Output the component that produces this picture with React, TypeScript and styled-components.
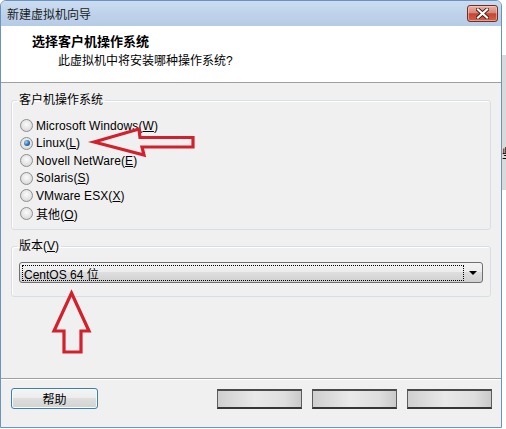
import React from "react";
import styled, { createGlobalStyle } from "styled-components";

const Global = createGlobalStyle`
  html, body { margin: 0; padding: 0; background: #ffffff; }
  body {
    font-family: "Liberation Sans", "Noto Sans CJK SC", sans-serif;
    font-size: 12px;
    color: #000;
  }
`;

const Page = styled.div`
  position: relative;
  display: flex;
  width: 506px;
  height: 429px;
  overflow: hidden;
`;

const Window = styled.div`
  width: 502px;
  height: 428px;
  box-sizing: border-box;
  border: 1px solid #6b93bf;
  border-radius: 6px 6px 0 0;
  display: flex;
  flex-direction: column;
  background: #f0f0f0;
  overflow: hidden;
  flex: none;
`;

const TitleBar = styled.div`
  height: 25px;
  flex: none;
  display: flex;
  align-items: center;
  justify-content: space-between;
  padding: 0 3px 0 6px;
  background: linear-gradient(#cadcf0, #bcd1e9 60%, #b6cce6);
  color: #1a1a1a;
  font-size: 12px;
`;

const CloseButton = styled.div`
  width: 31px;
  height: 17px;
  box-sizing: border-box;
  border: 1px solid #6e2f28;
  border-radius: 3px;
  background: linear-gradient(#eab2a4 0%, #d98675 45%, #c7452f 52%, #d0614c 100%);
  display: flex;
  align-items: center;
  justify-content: center;
  box-shadow: inset 0 0 0 1px rgba(255, 220, 210, 0.5);
`;

const Header = styled.div`
  height: 57px;
  flex: none;
  box-sizing: border-box;
  background: #ffffff;
  border-bottom: 1px solid #a0a0a0;
  padding: 8px 0 0 31px;
`;

const Heading = styled.div`
  font-size: 13px;
  font-weight: bold;
  line-height: 16px;
`;

const Subtitle = styled.div`
  font-size: 12px;
  line-height: 16px;
  margin-top: 3px;
  padding-left: 26px;
`;

const Body = styled.div`
  flex: 1;
  padding: 10px 10px 0 10px;
  display: flex;
  flex-direction: column;
`;

const Group = styled.fieldset<{ $top: number; $pt: number; $pb: number }>`
  margin: ${(p) => p.$top}px 0 0 0;
  padding: ${(p) => p.$pt}px 0 ${(p) => p.$pb}px 0;
  border: 1px solid #d5dfe5;
  border-radius: 3px;
  box-shadow: inset 1px 1px 0 #ffffff;
  min-width: 0;
`;

const Legend = styled.legend`
  margin-left: 5px;
  padding: 0 2px;
  font-size: 12px;
  line-height: 14px;
`;

const RadioList = styled.div`
  display: flex;
  flex-direction: column;
  padding-left: 8px;
`;

const RadioRow = styled.div`
  height: 17.5px;
  display: flex;
  align-items: center;
  gap: 3px;
  font-size: 12px;
  letter-spacing: 0.1px;
`;

const Circle = styled.span<{ $checked?: boolean }>`
  position: relative;
  width: 13px;
  height: 13px;
  box-sizing: border-box;
  border-radius: 50%;
  border: 1px solid #8c8e8e;
  background: radial-gradient(circle at 50% 40%, #fbfbfb, #e2e2e2 60%, #cfcfcf);
  flex: none;
  &::after {
    content: "";
    display: ${(p) => (p.$checked ? "block" : "none")};
    position: absolute;
    left: 2.5px;
    top: 2.5px;
    width: 6px;
    height: 6px;
    border-radius: 50%;
    background: radial-gradient(circle at 35% 35%, #a8d6f7, #2a6cb0 55%, #143c70);
  }
`;

const Combo = styled.div`
  margin: 0 7px;
  height: 21px;
  box-sizing: border-box;
  border: 1px solid #707070;
  border-radius: 3px;
  background: linear-gradient(#f3f3f3, #ececec 50%, #dedede 50%, #d0d0d0);
  display: flex;
  align-items: stretch;
`;

const FocusRect = styled.div`
  flex: 1;
  margin: 2px 0 1px 2px;
  border: 1px dotted #000;
  padding-left: 1px;
  display: flex;
  align-items: center;
  font-size: 12px;
`;

const DropArrow = styled.div`
  width: 18px;
  flex: none;
  display: flex;
  align-items: center;
  justify-content: center;
  &::before {
    content: "";
    border-left: 4px solid transparent;
    border-right: 4px solid transparent;
    border-top: 4px solid #000;
  }
`;

const Footer = styled.div`
  height: 39px;
  flex: none;
  border-top: 1px solid #a0a0a0;
  box-shadow: inset 0 1px 0 #ffffff;
  padding: 9px 9px 0 10px;
  display: flex;
  align-items: flex-start;
`;

const HelpButton = styled.div`
  width: 87px;
  height: 21px;
  box-sizing: border-box;
  border: 1px solid #3c7fb1;
  border-radius: 3px;
  background: linear-gradient(#f4f4f4, #ececec 50%, #dedede 50%, #d2d2d2);
  box-shadow: inset 0 0 0 1px #f8fbfd;
  display: flex;
  align-items: center;
  justify-content: center;
  font-size: 12px;
`;

const Spacer = styled.div`
  flex: 1;
`;

const ButtonGroup = styled.div`
  display: flex;
  gap: 10px;
  margin-top: 1px;
`;

const BlankButton = styled.div`
  width: 85px;
  height: 20px;
  box-sizing: border-box;
  border: 1px solid #5c5c5c;
  border-top: 2px solid #4a4a4a;
  border-bottom: 2px solid #363636;
  background: linear-gradient(90deg, #cfcfcf, #e9e9e9 45%, #dedede 80%, #c9c9c9);
`;

const Strip = styled.div`
  flex: 1;
  display: flex;
  flex-direction: column;
`;

const StripBlank = styled.div<{ $h: number }>`
  height: ${(p) => p.$h}px;
  background: #ffffff;
`;

const StripGray = styled.div`
  height: 135px;
  background: #dadada;
  display: flex;
  align-items: center;
  overflow: hidden;
  font-size: 12px;
  padding-top: 60px;
  box-sizing: border-box;
`;

const Annotations = styled.svg`
  position: absolute;
  left: 0;
  top: 0;
  pointer-events: none;
`;

const options: { label: string; key: string; checked?: boolean }[] = [
  { label: "Microsoft Windows", key: "W" },
  { label: "Linux", key: "L", checked: true },
  { label: "Novell NetWare", key: "E" },
  { label: "Solaris", key: "S" },
  { label: "VMware ESX", key: "X" },
  { label: "其他", key: "O" },
];

export default function App() {
  return (
    <>
      <Global />
      <Page>
        <Window>
          <TitleBar>
            <span>新建虚拟机向导</span>
            <CloseButton>
              <svg width="13" height="11" viewBox="0 0 13 11">
                <path d="M2 1.5 L11 9.5 M11 1.5 L2 9.5" stroke="#4a1c16" strokeWidth="4" strokeLinecap="square" />
                <path d="M2 1.5 L11 9.5 M11 1.5 L2 9.5" stroke="#ffffff" strokeWidth="2.2" strokeLinecap="square" />
              </svg>
            </CloseButton>
          </TitleBar>
          <Header>
            <Heading>选择客户机操作系统</Heading>
            <Subtitle>此虚拟机中将安装哪种操作系统?</Subtitle>
          </Header>
          <Body>
            <Group $top={0} $pt={10} $pb={7}>
              <Legend>客户机操作系统</Legend>
              <RadioList>
                {options.map((o) => (
                  <RadioRow key={o.key}>
                    <Circle $checked={o.checked} />
                    <span>
                      {o.label}(<u>{o.key}</u>)
                    </span>
                  </RadioRow>
                ))}
              </RadioList>
            </Group>
            <Group $top={9} $pt={9} $pb={13}>
              <Legend>
                版本(<u>V</u>)
              </Legend>
              <Combo>
                <FocusRect>CentOS 64 位</FocusRect>
                <DropArrow />
              </Combo>
            </Group>
          </Body>
          <Footer>
            <HelpButton>帮助</HelpButton>
            <Spacer />
            <ButtonGroup>
              <BlankButton />
              <BlankButton />
              <BlankButton />
            </ButtonGroup>
          </Footer>
        </Window>
        <Strip>
          <StripBlank $h={55} />
          <StripGray>些</StripGray>
          <StripBlank $h={239} />
        </Strip>
        <Annotations width="506" height="429" viewBox="0 0 506 429">
          <polygon
            points="94,142 139,129 140,137.5 193,137.5 193,147 142,147 144,155"
            fill="none"
            stroke="#d4202c"
            strokeWidth="3.2"
            strokeLinejoin="miter"
          />
          <polygon
            points="71.5,293 89,331 81,331 81,352 64,352 64,331 54,331"
            fill="none"
            stroke="#d4202c"
            strokeWidth="3.2"
            strokeLinejoin="miter"
          />
        </Annotations>
      </Page>
    </>
  );
}
